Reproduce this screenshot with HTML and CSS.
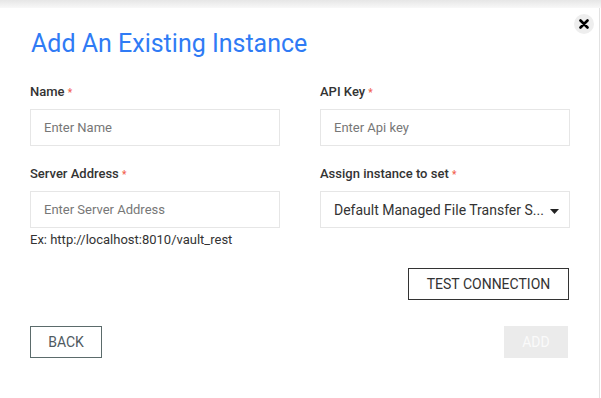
FILE: index.html
```html
<!DOCTYPE html>
<html lang="en">
<head>
    <meta charset="UTF-8">
    <meta name="viewport" content="width=device-width, initial-scale=1.0">
    <title>Add An Existing Instance</title>
    <link rel="stylesheet" href="styles.css">
</head>
<body>
    <div class="modal">
        <button class="close-btn" type="button" aria-label="Close">
            <svg width="10" height="10" viewBox="0 0 10 10">
                <path d="M1.5 1.5 L8.5 8.5 M8.5 1.5 L1.5 8.5" stroke="#000" stroke-width="2.6" stroke-linecap="round"/>
            </svg>
        </button>

        <h2 class="modal-title">Add An Existing Instance</h2>

        <form class="instance-form">
            <div class="form-grid">
                <div class="input-group">
                    <label for="name">Name <span class="req">*</span></label>
                    <input type="text" id="name" placeholder="Enter Name">
                </div>
                <div class="input-group">
                    <label for="api-key">API Key <span class="req">*</span></label>
                    <input type="text" id="api-key" placeholder="Enter Api key">
                </div>
                <div class="input-group">
                    <label for="server">Server Address <span class="req">*</span></label>
                    <input type="text" id="server" placeholder="Enter Server Address">
                    <p class="hint">Ex: http://localhost:8010/vault_rest</p>
                </div>
                <div class="input-group">
                    <label>Assign instance to set <span class="req">*</span></label>
                    <div class="select-box">
                        <span class="select-value">Default Managed File Transfer S...</span>
                        <svg class="caret" width="9" height="5" viewBox="0 0 9 5">
                            <path d="M0 0 H9 L4.5 5 Z" fill="#222"/>
                        </svg>
                    </div>
                </div>
            </div>

            <div class="test-row">
                <button type="button" class="btn btn-outline">Test Connection</button>
            </div>

            <div class="footer">
                <button type="button" class="btn btn-back">Back</button>
                <button type="submit" class="btn btn-add" disabled>Add</button>
            </div>
        </form>
    </div>
</body>
</html>
```

FILE: styles.css
```css
* {
    box-sizing: border-box;
}

body {
    margin: 0;
    padding: 0;
    font-family: Roboto, "Liberation Sans", sans-serif;
    color: #333;
    background-color: #fff;
    background-image: linear-gradient(#e6e6e6, #f8f8f8);
    background-size: 100% 8px;
    background-repeat: no-repeat;
}

.modal {
    position: relative;
    margin-top: 8px;
    width: 600px;
    height: 390px;
    background: #fff;
    border-right: 1px solid #e2e2e2;
    padding: 21px 30px 0 30px;
}

.close-btn {
    position: absolute;
    top: 6px;
    right: 5px;
    width: 20px;
    height: 20px;
    border: none;
    border-radius: 50%;
    background: #eeeeee;
    padding: 0;
    display: flex;
    align-items: center;
    justify-content: center;
    cursor: pointer;
}

.modal-title {
    margin: 0 0 25px 1px;
    font-size: 25px;
    line-height: 30px;
    font-weight: 400;
    color: #2f7bf5;
}

.form-grid {
    display: grid;
    grid-template-columns: 250px 250px;
    column-gap: 40px;
    row-gap: 20px;
}

.input-group label {
    display: block;
    font-size: 13px;
    line-height: 16px;
    font-weight: 500;
    color: #333;
    margin-bottom: 9px;
}

.req {
    color: #f2604f;
    font-size: 10px;
    line-height: 1;
}

.input-group input {
    display: block;
    width: 100%;
    height: 37px;
    padding: 0 13px;
    border: 1px solid #e6e6e6;
    border-radius: 0;
    font-family: inherit;
    font-size: 13px;
    color: #333;
    outline: none;
}

::placeholder {
    color: #777;
}

.hint {
    margin: 4px 0 0 0;
    font-size: 13px;
    line-height: 16px;
    color: #333;
}

.select-box {
    display: flex;
    align-items: center;
    height: 37px;
    padding: 0 10px 0 13px;
    border: 1px solid #e6e6e6;
    font-size: 14px;
    color: #333;
}

.select-value {
    flex: 1;
    white-space: nowrap;
    overflow: hidden;
    text-overflow: ellipsis;
    margin-right: 6px;
}

.caret {
    flex: none;
    margin-top: 3px;
}

.test-row {
    display: flex;
    justify-content: flex-end;
    margin-top: 20px;
}

.btn {
    height: 32px;
    font-family: inherit;
    font-size: 14px;
    text-transform: uppercase;
    background: #fff;
    cursor: pointer;
    border-radius: 0;
}

.btn-outline {
    width: 161px;
    border: 1px solid #333;
    color: #333;
}

.footer {
    display: flex;
    justify-content: space-between;
    margin-top: 26px;
}

.btn-back {
    width: 72px;
    border: 1px solid #5b6b6b;
    color: #4f5a5f;
}

.btn-add {
    width: 64px;
    border: none;
    background: #ebebeb;
    color: #fafafa;
    margin-right: 1px;
}
```
